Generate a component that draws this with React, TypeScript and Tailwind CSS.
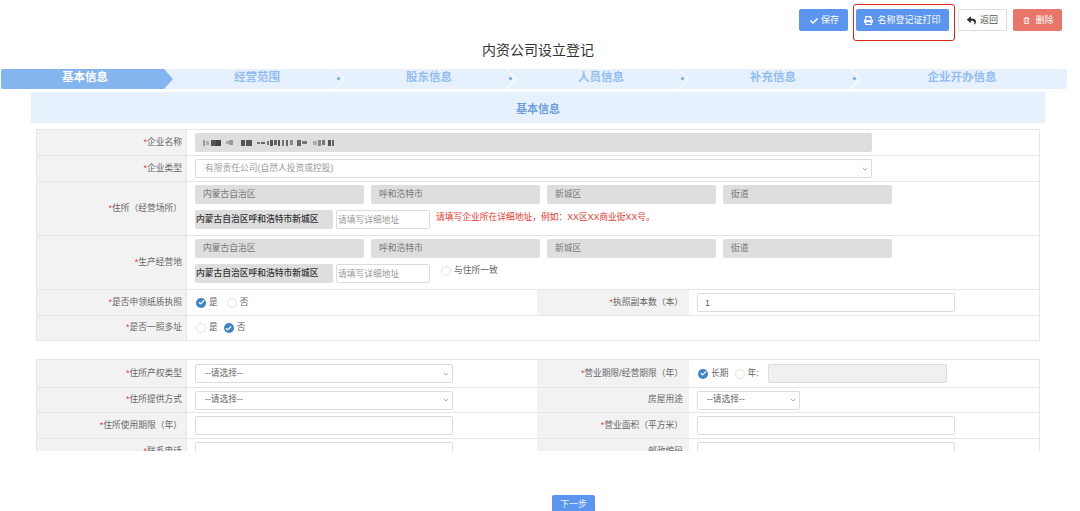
import { Check, ChevronDown } from "lucide-react"
import type { ReactNode } from "react"
import { FaCheck, FaPrint, FaRegTrashAlt, FaReply } from "react-icons/fa"

const steps = ["基本信息", "经营范围", "股东信息", "人员信息", "补充信息", "企业开办信息"]

// blurred-out company name: [width, height, gap after, shade]
const redacted: [number, number, number, string][] = [
    [2, 6, 1, "bg-[#999]"], [3, 4, 2, "bg-[#aaa]"], [5, 6, 0, "bg-[#555]"], [5, 6, 5, "bg-[#444]"],
    [3, 3, 0, "bg-[#aaa]"], [4, 5, 8, "bg-[#999]"], [4, 6, 1, "bg-[#555]"], [6, 6, 5, "bg-[#555]"],
    [3, 2, 1, "bg-[#777]"], [4, 2, 2, "bg-[#666]"], [2, 4, 1, "bg-[#777]"], [3, 6, 1, "bg-[#555]"],
    [3, 5, 1, "bg-[#666]"], [2, 6, 2, "bg-[#555]"], [2, 6, 2, "bg-[#777]"], [2, 6, 2, "bg-[#666]"],
    [3, 5, 4, "bg-[#888]"], [4, 6, 1, "bg-[#666]"], [5, 3, 6, "bg-[#777]"], [4, 4, 1, "bg-[#aaa]"],
    [3, 6, 1, "bg-[#888]"], [3, 5, 3, "bg-[#777]"], [3, 6, 1, "bg-[#555]"], [2, 6, 0, "bg-[#666]"],
]

const Label = ({ text, required = true, className = "" }: { text: string; required?: boolean; className?: string }) => (
    <div className={`flex items-center justify-end bg-[#f2f2f2] text-[8.75px] text-[#666] ${className}`}>
        {required && <span className="text-[#e53935]">*</span>}
        {text}
    </div>
)

const Radio = ({ checked, text }: { checked?: boolean; text: string }) => (
    <span className="flex items-center gap-[3px] text-[8.75px] text-[#666]">
        {checked ? (
            <span className="flex h-[10px] w-[10px] items-center justify-center rounded-full bg-[#3f83c9]">
                <Check size={7} color="#fff" strokeWidth={4} />
            </span>
        ) : (
            <span className="h-[10px] w-[10px] rounded-full border border-[#e2e2e2] bg-white"></span>
        )}
        {text}
    </span>
)

const GrayBox = ({ text, className = "" }: { text: string; className?: string }) => (
    <div className={`flex h-[19px] items-center rounded-[2px] bg-[#dedede] pl-[8px] text-[8.75px] text-[#777] ${className}`}>{text}</div>
)

const TextInput = ({ value, placeholder, className = "" }: { value?: string; placeholder?: string; className?: string }) => (
    <input
        readOnly
        value={value}
        placeholder={placeholder}
        className={`h-[19px] rounded-[2px] border border-[#dcdcdc] bg-white text-[8.75px] text-[#555] outline-none placeholder:text-[#999] ${className}`}
    />
)

const SelectBox = ({ text, className = "", color = "text-[#666]" }: { text: string; className?: string; color?: string }) => (
    <div className={`flex h-[19px] items-center justify-between rounded-[2px] border border-[#dcdcdc] bg-white pl-[9px] pr-[2px] text-[8.75px] ${color} ${className}`}>
        {text}
        <ChevronDown size={8} color="#888" />
    </div>
)

const AddressRow = ({ extra }: { extra: ReactNode }) => (
    <div className="flex h-[54px] border-t border-[#e6e6e6]">
        <Label text={extra ? "生产经营地" : "住所（经营场所）"} className="w-[149px] pr-[4px]" />
        <div className="flex flex-col gap-[6px] border-l border-[#e6e6e6] pl-[8px] pt-[3px]">
            <div className="flex gap-[7px]">
                <GrayBox text="内蒙古自治区" className="w-[169px]" />
                <GrayBox text="呼和浩特市" className="w-[169px]" />
                <GrayBox text="新城区" className="w-[169px]" />
                <GrayBox text="街道" className="w-[169px]" />
            </div>
            <div className="flex">
                <GrayBox text="内蒙古自治区呼和浩特市新城区" className="w-[138px] !pl-[1px] font-medium !text-[#333]" />
                <TextInput placeholder="请填写详细地址" className="ml-[3px] w-[94px] pl-[1px]" />
                {extra || <span className="ml-[6px] text-[8.75px] leading-[14px] text-[#e8382d]">请填写企业所在详细地址，例如：XX区XX商业街XX号。</span>}
            </div>
        </div>
    </div>
)

const DoubleRow = ({ left, leftLabel, right, rightLabel, rightRequired = true, leftRequired = true, height = "h-[26px]", first = false }: {
    left: ReactNode
    leftLabel: string
    right: ReactNode
    rightLabel: string
    rightRequired?: boolean
    leftRequired?: boolean
    height?: string
    first?: boolean
}) => (
    <div className={`flex ${height} ${first ? "" : "border-t border-[#e6e6e6]"}`}>
        <Label text={leftLabel} required={leftRequired} className="w-[149px] pr-[4px]" />
        <div className="flex w-[351px] items-center border-l border-[#e6e6e6] pl-[8px]">{left}</div>
        <Label text={rightLabel} required={rightRequired} className="w-[152px] pr-[6px]" />
        <div className="flex flex-1 items-center pl-[8px]">{right}</div>
    </div>
)

const App = () => {
    return (
        <div className="relative h-[511px] w-[1080px] overflow-hidden bg-white font-['Liberation_Sans','Noto_Sans_CJK_SC',sans-serif]">
            <div className="flex h-[40px] justify-end pr-[18px] pt-[9px] text-[9px]">
                <button className="flex h-[22px] w-[49px] items-center justify-center gap-[3px] rounded-[2px] bg-[#5b95f0] pl-[2px] pt-[1px] text-white">
                    <FaCheck size={8} />保存
                </button>
                <button className="ml-[8px] flex h-[22px] w-[93px] items-center justify-center gap-[4px] rounded-[2px] bg-[#5b95f0] pt-[1px] text-white">
                    <FaPrint size={9} />名称登记证打印
                </button>
                <button className="ml-[9px] flex h-[22px] w-[49px] items-center justify-center gap-[4px] rounded-[2px] border border-[#dedede] bg-white pt-[1px] text-[#555]">
                    <FaReply size={9} color="#333" />返回
                </button>
                <button className="ml-[6px] flex h-[22px] w-[49px] items-center justify-center gap-[5px] rounded-[2px] bg-[#e8766a] pl-[2px] pt-[1px] text-white">
                    <FaRegTrashAlt size={7} />删除
                </button>
            </div>
            {/* annotation frame over the print button */}
            <div className="absolute left-[853px] top-[4px] h-[37px] w-[102px] rounded-[3px] border-[1.5px] border-[#e2281c]"></div>

            <div className="mb-[7px] h-[22px] pr-[4px] text-center text-[14px] leading-[21px] text-[#333]">内资公司设立登记</div>

            <div className="ml-[1px] flex h-[20px] w-[1066px] rounded-[2px] bg-[#e6f1fd]">
                {steps.map((step, index) => (
                    <div
                        key={step}
                        className={`relative flex items-start justify-center pr-[4px] text-[11.5px] font-bold leading-[16px] ${index === 5 ? "flex-1" : "w-[172px]"} ${index === 0 ? "rounded-l-[2px] bg-[#85b5ef] text-white [clip-path:polygon(0_0,163px_0,172px_50%,163px_100%,0_100%)]" : "text-[#93bdf1]"}`}
                    >
                        {step}
                        {index > 0 && index < 5 && (
                            <>
                                <svg className="absolute right-0 top-0" width="11" height="20" viewBox="0 0 11 20" fill="none">
                                    <path d="M0 0L10.5 10L0 20" stroke="#fff" strokeWidth="1" />
                                </svg>
                                <span className="absolute right-[5px] top-[8px] h-[3px] w-[3px] rounded-full bg-[#6ea6ea]"></span>
                            </>
                        )}
                    </div>
                ))}
            </div>

            <div className="mt-[3px] ml-[31px] flex h-[31px] w-[1014px] items-center justify-center bg-[#e6f1fd] pt-[3px] text-[11px] font-bold text-[#6b9fdf]">
                基本信息
            </div>

            <div className="h-[328px] overflow-hidden pt-[6px]">
                <div className="ml-[36px] w-[1004px] border border-[#e6e6e6]">
                    <div className="flex h-[25px]">
                        <Label text="企业名称" className="w-[149px] pr-[4px]" />
                        <div className="flex items-center border-l border-[#e6e6e6] pl-[8px]">
                            <div className="flex h-[19px] w-[677px] items-center rounded-[2px] bg-[#dedede] pl-[8px] blur-[0.6px]">
                                {redacted.map(([width, height, gap, shade], index) => (
                                    <span key={index} className={shade} style={{ width, height, marginRight: gap }}></span>
                                ))}
                            </div>
                        </div>
                    </div>
                    <div className="flex h-[26px] border-t border-[#e6e6e6]">
                        <Label text="企业类型" className="w-[149px] pr-[4px]" />
                        <div className="flex items-center border-l border-[#e6e6e6] pl-[8px]">
                            <SelectBox text="有限责任公司(自然人投资或控股)" className="w-[677px]" color="text-[#999]" />
                        </div>
                    </div>
                    <AddressRow extra={null} />
                    <AddressRow
                        extra={<span className="ml-[11px] h-[14px]"><Radio text="与住所一致" /></span>}
                    />
                    <DoubleRow
                        leftLabel="是否申领纸质执照"
                        left={<div className="ml-[1px] flex gap-[9px]"><Radio checked text="是" /><Radio text="否" /></div>}
                        rightLabel="执照副本数（本）"
                        right={<TextInput value="1" className="w-[258px] pl-[7px]" />}
                    />
                    <div className="flex h-[25px] border-t border-[#e6e6e6]">
                        <Label text="是否一照多址" className="w-[149px] pr-[4px]" />
                        <div className="flex items-center gap-[6px] border-l border-[#e6e6e6] pl-[9px]">
                            <Radio text="是" />
                            <Radio checked text="否" />
                        </div>
                    </div>
                </div>

                <div className="ml-[36px] mt-[18px] w-[1004px] border border-[#e6e6e6]">
                    <DoubleRow
                        first
                        height="h-[27px]"
                        leftLabel="住所产权类型"
                        left={<SelectBox text="--请选择--" className="w-[258px]" />}
                        rightLabel="营业期限/经营期限（年）"
                        right={
                            <div className="ml-[1px] flex items-center">
                                <Radio checked text="长期" />
                                <span className="ml-[6px]"><Radio text="年:" /></span>
                                <div className="ml-[9px] h-[19px] w-[179px] rounded-[2px] border border-[#dcdcdc] bg-[#f0f0f0]"></div>
                            </div>
                        }
                    />
                    <DoubleRow
                        height="h-[25px]"
                        leftLabel="住所提供方式"
                        left={<SelectBox text="--请选择--" className="w-[258px]" />}
                        rightLabel="房屋用途"
                        rightRequired={false}
                        right={<SelectBox text="--请选择--" className="w-[103px]" />}
                    />
                    <DoubleRow
                        height="h-[26px]"
                        leftLabel="住所使用期限（年）"
                        left={<TextInput className="w-[258px]" />}
                        rightLabel="营业面积（平方米）"
                        right={<TextInput className="w-[258px]" />}
                    />
                    <DoubleRow
                        leftLabel="联系电话"
                        left={<TextInput className="w-[258px]" />}
                        rightLabel="邮政编码"
                        rightRequired={false}
                        right={<TextInput className="w-[258px]" />}
                    />
                </div>
            </div>

            <button className="ml-[552px] mt-[44px] h-[22px] w-[43px] rounded-t-[2px] bg-[#5b95f0] pb-[2px] text-[9px] text-[#e6f0ff]">下一步</button>
        </div>
    )
}

export default App
